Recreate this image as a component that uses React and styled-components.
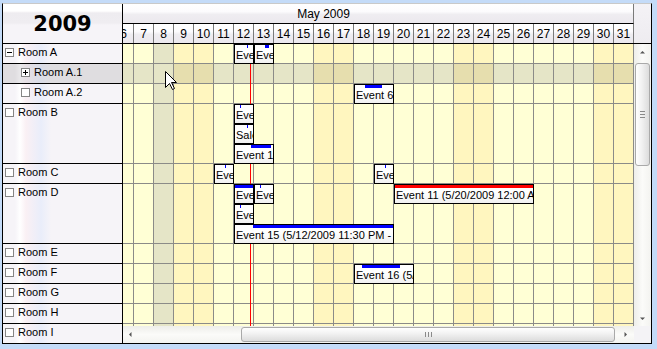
import React from "react";
import styled, { createGlobalStyle } from "styled-components";

const DAYS = Array.from({ length: 31 }, (_, i) => i + 1);
const FIRST_SHOWN = 6;
const WEEKEND = [2, 3, 9, 10, 16, 17, 23, 24, 30, 31];
const HOVER_DAY = 8;
const CELL = 20;

const rooms = [
  { id: "A", name: "Room A", lanes: 1, icon: "minus" },
  { id: "A1", name: "Room A.1", lanes: 1, icon: "plus", indent: true, hover: true },
  { id: "A2", name: "Room A.2", lanes: 1, icon: "box", indent: true },
  { id: "B", name: "Room B", lanes: 3, icon: "box" },
  { id: "C", name: "Room C", lanes: 1, icon: "box" },
  { id: "D", name: "Room D", lanes: 3, icon: "box" },
  { id: "E", name: "Room E", lanes: 1, icon: "box" },
  { id: "F", name: "Room F", lanes: 1, icon: "box" },
  { id: "G", name: "Room G", lanes: 1, icon: "box" },
  { id: "H", name: "Room H", lanes: 1, icon: "box" },
  { id: "I", name: "Room I", lanes: 1, icon: "box" },
];

// bar: [left, width] inside the box, in px
const events = [
  { room: "A", lane: 0, day: 12, days: 1, text: "Event 2", bar: [13, 1] },
  { room: "A", lane: 0, day: 13, days: 1, text: "Event 3", bar: [11, 4] },
  { room: "A2", lane: 0, day: 18, days: 2, text: "Event 6", bar: [11, 17] },
  { room: "B", lane: 0, day: 12, days: 1, text: "Event 4", bar: [6, 1] },
  { room: "B", lane: 1, day: 12, days: 1, text: "Sale", bar: [13, 1] },
  { room: "B", lane: 2, day: 12, days: 2, text: "Event 1", bar: [17, 20] },
  { room: "C", lane: 0, day: 11, days: 1, text: "Event 7", bar: [11, 1] },
  { room: "C", lane: 0, day: 19, days: 1, text: "Event 8", bar: [11, 1] },
  { room: "D", lane: 0, day: 12, days: 1, text: "Event 9", bar: [0, 20] },
  { room: "D", lane: 0, day: 13, days: 1, text: "Event 10", bar: [6, 1] },
  { room: "D", lane: 0, day: 20, days: 7, text: "Event 11 (5/20/2009 12:00 AM - 5/27/2009)", bar: [0, 140], red: true },
  { room: "D", lane: 1, day: 12, days: 1, text: "Event 12", bar: [6, 1] },
  { room: "D", lane: 2, day: 12, days: 8, text: "Event 15 (5/12/2009 11:30 PM - 5/20/2009)", bar: [19, 141] },
  { room: "F", lane: 0, day: 18, days: 3, text: "Event 16 (5/18/2009)", bar: [8, 38] },
];

const roomTops = {};
rooms.reduce((top, r) => {
  roomTops[r.id] = top;
  return top + r.lanes * CELL;
}, 0);

const GlobalStyle = createGlobalStyle`
  html, body { margin: 0; padding: 0; }
  body {
    background: #c4dbf8;
    font-family: "Liberation Sans", Arial, sans-serif;
  }
`;

const Page = styled.div`
  width: 657px;
  height: 349px;
  box-sizing: border-box;
  padding: 3px 0 0 2px;
`;

const Frame = styled.div`
  display: grid;
  grid-template-columns: 120px 511px 17px;
  grid-template-rows: 40px 299px;
  width: 650px;
  height: 341px;
  box-sizing: border-box;
  border: 1px solid #000;
  border-top-color: #c9c9c9;
  background: #fff;
  overflow: hidden;
`;

const YearCell = styled.div`
  display: flex;
  align-items: center;
  justify-content: center;
  border-right: 1px solid #000;
  border-bottom: 1px solid #000;
  font: bold 21px "DejaVu Sans", sans-serif;
  color: #000;
  background: linear-gradient(
    to bottom,
    #ffffff 0px,
    #ffffff 7px,
    #eeecf0 9px,
    #efedf1 19px,
    #f6f4f8 21px,
    #f6f4f8 100%
  );
`;

const TimeHeader = styled.div`
  overflow: hidden;
  border-bottom: 1px solid #000;
`;

const HeaderTrack = styled.div`
  width: 620px;
  margin-left: -109px;
`;

const headerGlass = `
  background: linear-gradient(
    to bottom,
    #ffffff 0%,
    #fcfbfd 40%,
    #efedf1 55%,
    #ebe8ee 100%
  );
`;

const MonthCell = styled.div`
  height: 20px;
  box-sizing: border-box;
  border-right: 1px solid #7a7a7a;
  border-bottom: 1px solid #000;
  display: flex;
  align-items: center;
  justify-content: center;
  font-size: 12px;
  ${headerGlass}
`;

const DayRow = styled.div`
  display: flex;
  height: 19px;
  padding-left: ${(FIRST_SHOWN - 1) * CELL}px;
  ${headerGlass}
`;

const DayCell = styled.div`
  width: ${CELL}px;
  flex: none;
  box-sizing: border-box;
  border-right: 1px solid #7a7a7a;
  display: flex;
  align-items: center;
  justify-content: center;
  font-size: 12px;
  overflow: hidden;
`;

const HeaderEnd = styled.div`
  border-bottom: 1px solid #000;
  background: linear-gradient(to bottom, #f4f2f6, #eeecf0);
`;

const RowHeaders = styled.div`
  overflow: hidden;
  border-right: 1px solid #000;
`;

const stripes = (base, a, b, c) => `
  linear-gradient(
    to right,
    ${base} 0px,
    ${base} 12px,
    ${a} 17px,
    ${b} 23px,
    ${c} 38px,
    ${base} 48px,
    ${base} 100%
  )
`;

const RowHeader = styled.div`
  height: ${(p) => p.$lanes * CELL}px;
  box-sizing: border-box;
  border-bottom: 1px solid #000;
  display: flex;
  align-items: flex-start;
  gap: 4px;
  padding: 2px 0 0 ${(p) => (p.$indent ? 18 : 2)}px;
  font-size: 11px;
  line-height: 13px;
  background: ${(p) =>
    p.$hover
      ? stripes("#dfdde0", "#e9e8ea", "#e6dfe4", "#d9dce8")
      : stripes("#f6f4f8", "#ffffff", "#faf0f4", "#e9edfa")};
`;

const TreeIcon = styled.svg`
  flex: none;
  width: 9px;
  height: 9px;
  margin-top: 2px;
`;

const GridColumn = styled.div`
  display: flex;
  flex-direction: column;
  min-width: 0;
`;

const Viewport = styled.div`
  position: relative;
  height: 282px;
  overflow: hidden;
`;

const GridTrack = styled.div`
  position: relative;
  width: 620px;
  margin-left: -109px;
`;

const GridRow = styled.div`
  display: flex;
  height: ${(p) => p.$lanes * CELL}px;
`;

const Cell = styled.div`
  width: ${CELL}px;
  flex: none;
  box-sizing: border-box;
  border-right: 1px solid #8b8b88;
  border-bottom: 1px solid #8b8b88;
  background: ${(p) =>
    p.$hover
      ? p.$weekend
        ? "#e6deae"
        : "#e5e5c7"
      : p.$weekend
      ? "#fff6bf"
      : "#ffffd5"};
`;

const NowLine = styled.div`
  position: absolute;
  top: 0;
  bottom: 0;
  left: 236px;
  width: 1px;
  background: #ff0000;
`;

const EventBox = styled.div`
  position: absolute;
  height: ${CELL}px;
  box-sizing: border-box;
  border: 1px solid #000;
  background: linear-gradient(to bottom, #ffffff 40%, #f1f1f1 100%);
  overflow: hidden;
`;

const EventBar = styled.div`
  position: relative;
  height: 3px;
  background: #fff;
`;

const BarFill = styled.div`
  position: absolute;
  top: 0;
  height: 3px;
  background: ${(p) => (p.$red ? "#ff0000" : "#0000ff")};
`;

const EventText = styled.div`
  font-size: 11px;
  line-height: 14px;
  padding-left: 1px;
  white-space: nowrap;
  color: #000;
`;

const Cursor = styled.svg`
  position: absolute;
  left: 42px;
  top: 27px;
  width: 12px;
  height: 19px;
`;

const HScroll = styled.div`
  position: relative;
  height: 17px;
  background: linear-gradient(to bottom, #eeeeea, #fbfbf9 50%, #f3f3f0);
`;

const HThumb = styled.div`
  position: absolute;
  left: 118px;
  width: 374px;
  top: 1px;
  bottom: 1px;
  box-sizing: border-box;
  border: 1px solid #a9a9a9;
  border-radius: 3px;
  background: linear-gradient(to bottom, #ffffff, #f1f1f1 45%, #dcdcdc 100%);
  display: flex;
  align-items: center;
  justify-content: center;
`;

const VColumn = styled.div`
  display: flex;
  flex-direction: column;
`;

const VScroll = styled.div`
  position: relative;
  height: 282px;
  background: linear-gradient(to right, #eeeeea, #fbfbf9 50%, #f3f3f0);
`;

const VThumb = styled.div`
  position: absolute;
  top: 19px;
  height: 103px;
  left: 1px;
  right: 1px;
  box-sizing: border-box;
  border: 1px solid #a9a9a9;
  border-radius: 3px;
  background: linear-gradient(to right, #ffffff, #f1f1f1 45%, #dcdcdc 100%);
  display: flex;
  align-items: center;
  justify-content: center;
`;

const Arrow = styled.svg`
  position: absolute;
  width: 5px;
  height: 5px;
`;

const ScrollCorner = styled.div`
  height: 17px;
  background: #f4f3f6;
`;

const Icon = ({ kind }) => (
  <TreeIcon viewBox="0 0 9 9">
    <rect x="0.5" y="0.5" width="8" height="8" fill="#fff" stroke="#858585" />
    {kind !== "box" && <path d="M2 4.5h5" stroke="#000" />}
    {kind === "plus" && <path d="M4.5 2v5" stroke="#000" />}
  </TreeIcon>
);

const Grip = ({ vertical }) => (
  <svg width="7" height="5" viewBox="0 0 7 5" style={vertical ? { transform: "rotate(90deg)" } : undefined}>
    <path d="M0.5 0v5M3.5 0v5M6.5 0v5" stroke="#8a8a8a" />
  </svg>
);

export default function App() {
  return (
    <>
      <GlobalStyle />
      <Page>
        <Frame>
          <YearCell>2009</YearCell>
          <TimeHeader>
            <HeaderTrack>
              <MonthCell>May 2009</MonthCell>
              <DayRow>
                {DAYS.filter((d) => d >= FIRST_SHOWN).map((d) => (
                  <DayCell key={d}>{d}</DayCell>
                ))}
              </DayRow>
            </HeaderTrack>
          </TimeHeader>
          <HeaderEnd />

          <RowHeaders>
            {rooms.map((r) => (
              <RowHeader key={r.id} $lanes={r.lanes} $indent={r.indent} $hover={r.hover}>
                <Icon kind={r.icon} />
                <span>{r.name}</span>
              </RowHeader>
            ))}
          </RowHeaders>

          <GridColumn>
            <Viewport>
              <GridTrack>
                {rooms.map((r) => (
                  <GridRow key={r.id} $lanes={r.lanes}>
                    {DAYS.map((d) => (
                      <Cell
                        key={d}
                        $weekend={WEEKEND.includes(d)}
                        $hover={r.hover || d === HOVER_DAY}
                      />
                    ))}
                  </GridRow>
                ))}
                <NowLine />
                {events.map((e, i) => (
                  <EventBox
                    key={i}
                    style={{
                      left: (e.day - 1) * CELL,
                      top: roomTops[e.room] + e.lane * CELL,
                      width: e.days * CELL,
                    }}
                  >
                    <EventBar>
                      <BarFill $red={e.red} style={{ left: e.bar[0] - 1, width: e.bar[1] }} />
                    </EventBar>
                    <EventText>{e.text}</EventText>
                  </EventBox>
                ))}
              </GridTrack>
              <Cursor viewBox="0 0 12 19">
                <path
                  d="M0.5 0.5V16.5L4.5 12.5L7.5 18.5L9.5 17.5L6.5 11.5H11.5Z"
                  fill="#fff"
                  stroke="#000"
                  strokeLinejoin="miter"
                />
              </Cursor>
            </Viewport>
            <HScroll>
              <Arrow viewBox="0 0 5 5" style={{ left: 5, top: 6 }}>
                <path d="M3.5 0V5L1 2.5Z" fill="#555" />
              </Arrow>
              <HThumb>
                <Grip />
              </HThumb>
              <Arrow viewBox="0 0 5 5" style={{ right: 6, top: 6 }}>
                <path d="M1.5 0V5L4 2.5Z" fill="#555" />
              </Arrow>
            </HScroll>
          </GridColumn>

          <VColumn>
            <VScroll>
              <Arrow viewBox="0 0 5 5" style={{ left: 6, top: 6 }}>
                <path d="M0 3.5H5L2.5 1Z" fill="#555" />
              </Arrow>
              <VThumb>
                <Grip vertical />
              </VThumb>
              <Arrow viewBox="0 0 5 5" style={{ left: 6, bottom: 5 }}>
                <path d="M0 1.5H5L2.5 4Z" fill="#555" />
              </Arrow>
            </VScroll>
            <ScrollCorner />
          </VColumn>
        </Frame>
      </Page>
    </>
  );
}
